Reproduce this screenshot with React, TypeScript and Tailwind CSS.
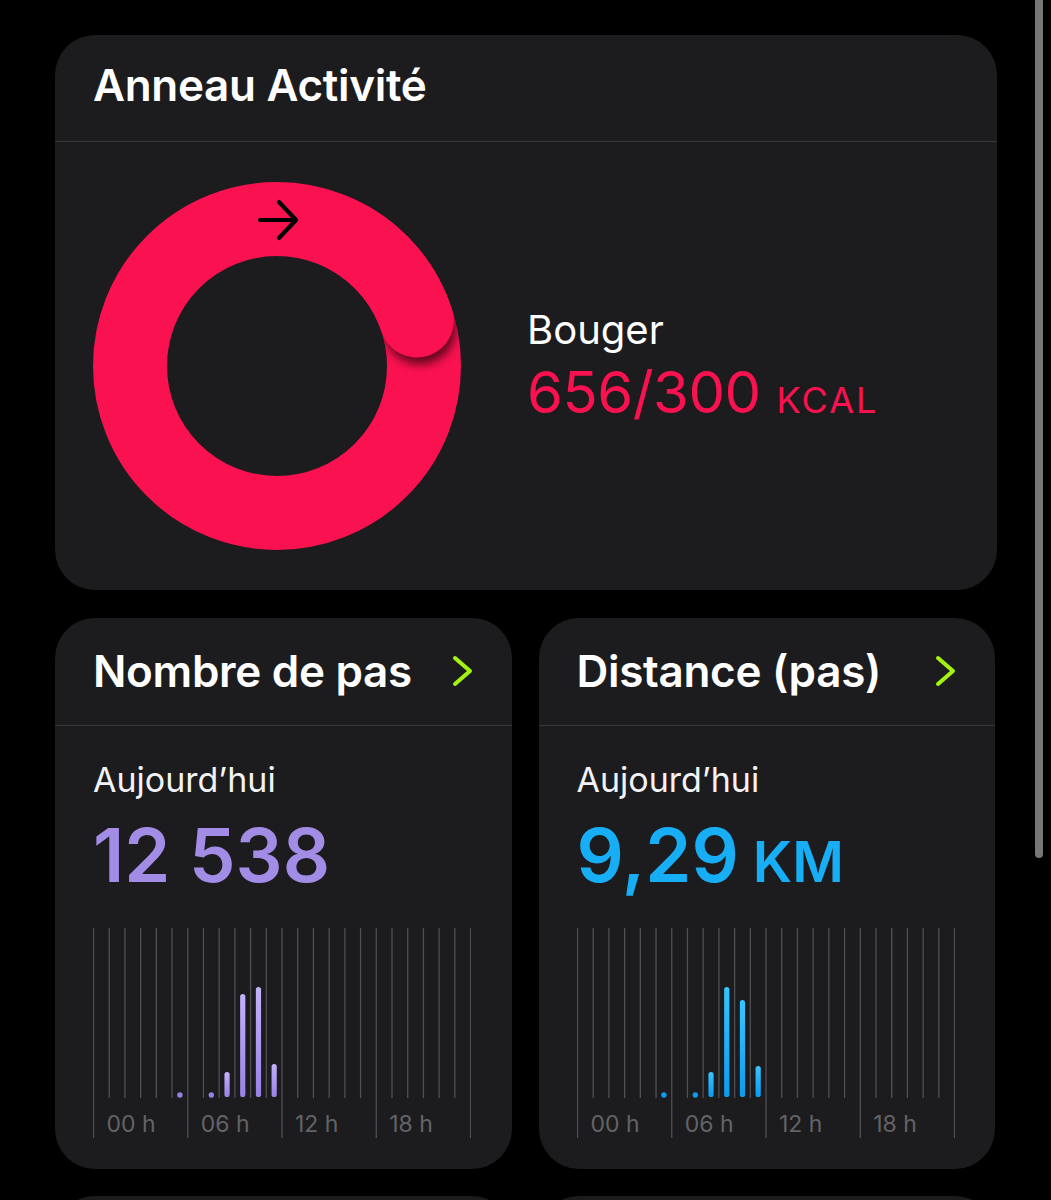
import React from "react";

const FONT = { fontFamily: 'Inter, "Noto Sans", "Liberation Sans", sans-serif' };

type Bar = { slot: number; top: number };

function HourChart({ bars, dots, from, to, id }: { bars: Bar[]; dots: number[]; from: string; to: string; id: string }) {
  const step = 15.71;
  const lines = Array.from({ length: 25 }, (_, i) => i);
  const labels = ["00 h", "06 h", "12 h", "18 h"];
  return (
    <svg width="378" height="212" viewBox="0 0 378 212" className="block">
      <defs>
        <linearGradient id={id} x1="0" y1="0" x2="0" y2="1">
          <stop offset="0" stopColor={from} />
          <stop offset="1" stopColor={to} />
        </linearGradient>
      </defs>
      {lines.map((i) => {
        const x = 0.5 + i * step;
        const major = i % 6 === 0;
        return (
          <line key={i} x1={x} x2={x} y1={0} y2={major ? 210 : 170} stroke="#505054" strokeWidth={1.3} />
        );
      })}
      {labels.map((l, k) => (
        <text key={l} x={0.5 + k * 6 * step + 13} y={204} fill="#636367" fontSize="23" style={FONT}>
          {l}
        </text>
      ))}
      {dots.map((s) => (
        <circle key={s} cx={0.5 + (s + 0.5) * step} cy={167} r={2.7} fill={to} />
      ))}
      {bars.map((b) => (
        <rect
          key={b.slot}
          x={0.5 + (b.slot + 0.5) * step - 2.6}
          y={b.top}
          width={5.2}
          height={169 - b.top}
          rx={2.6}
          fill={`url(#${id})`}
        />
      ))}
    </svg>
  );
}

function Chevron() {
  return (
    <svg width="22" height="32" viewBox="0 0 22 32" className="block">
      <path d="M3 3 L18 16 L3 29" fill="none" stroke="#a4f30c" strokeWidth="4" strokeLinecap="round" strokeLinejoin="round" />
    </svg>
  );
}

function Ring() {
  return (
    <svg width="370" height="370" viewBox="0 0 370 370" className="block shrink-0">
      <defs>
        <mask id="ringMask">
          <circle cx="185" cy="185" r="147" fill="none" stroke="white" strokeWidth="74" />
        </mask>
        <filter id="blur" x="-50%" y="-50%" width="200%" height="200%">
          <feGaussianBlur stdDeviation="5" />
        </filter>
      </defs>
      <circle cx="185" cy="185" r="147" fill="none" stroke="#fa114f" strokeWidth="74" />
      <g mask="url(#ringMask)">
        <circle cx="328" cy="147.5" r="36" fill="#000" opacity="0.6" filter="url(#blur)" />
      </g>
      <path d="M 258.5 57.7 A 147 147 0 0 1 324.8 139.6" fill="none" stroke="#fa114f" strokeWidth="74" strokeLinecap="round" />
      <path d="M 168 39 L 202 39 M 187 21 L 204 39 L 187 57" fill="none" stroke="#000" strokeWidth="4.2" strokeLinecap="round" strokeLinejoin="round" />
    </svg>
  );
}

function StatCard({
  title,
  value,
  unit,
  color,
  chart,
}: {
  title: string;
  value: string;
  unit?: string;
  color: string;
  chart: React.ReactNode;
}) {
  return (
    <div className="rounded-[40px] bg-[#1c1c1e] h-[551px] overflow-hidden">
      <div className="h-[108px] border-b border-[#38383a] pt-[31px] pl-[38px] pr-[38px] flex items-start justify-between">
        <div className="h-[44px] flex items-center w-full justify-between">
          <span className="text-[44px] leading-none font-semibold text-white tracking-[-0.3px]">{title}</span>
          <Chevron />
        </div>
      </div>
      <div className="pl-[38px]">
        <div className="mt-[37px] text-[34px] leading-none text-[#f2f2f7]">Aujourd’hui</div>
        <div className="mt-[21px] flex items-baseline font-semibold leading-none" style={{ color }}>
          <span className="text-[74px]">{value}</span>
          {unit && <span className="text-[56px] ml-[14px]">{unit}</span>}
        </div>
        <div className="mt-[36px]">{chart}</div>
      </div>
    </div>
  );
}

export default function App() {
  return (
    <div className="relative min-h-screen bg-black overflow-hidden" style={FONT}>
      <div className="pl-[55px] pt-[35px] pb-[40px]">
        <div className="w-[942px] h-[555px] rounded-[40px] bg-[#1c1c1e] overflow-hidden">
          <div className="h-[107px] border-b border-[#38383a] pt-[28px] pl-[38px]">
            <span className="text-[44px] leading-none font-semibold text-white tracking-[-0.3px]">Anneau Activité</span>
          </div>
          <div className="h-[447px] flex items-center pl-[37px]">
            <Ring />
            <div className="ml-[65px] flex flex-col">
              <div className="text-[40px] leading-none text-white">Bouger</div>
              <div className="mt-[13px] flex items-baseline leading-none text-[#fa114f]">
                <span className="text-[58px] tracking-[-0.5px]">656/300</span>
                <span className="text-[36px] ml-[16px] tracking-[2px]">KCAL</span>
              </div>
            </div>
          </div>
        </div>

        <div className="w-[940px] mt-[28px] grid grid-cols-2 gap-[27px]">
          <StatCard
            title="Nombre de pas"
            value="12 538"
            color="#a38ce6"
            chart={
              <HourChart
                id="gPurple"
                from="#c3b3fb"
                to="#9a80e6"
                dots={[5, 7]}
                bars={[
                  { slot: 8, top: 144 },
                  { slot: 9, top: 66 },
                  { slot: 10, top: 59 },
                  { slot: 11, top: 136 },
                ]}
              />
            }
          />
          <StatCard
            title="Distance (pas)"
            value="9,29"
            unit="KM"
            color="#18aef5"
            chart={
              <HourChart
                id="gBlue"
                from="#37c4ff"
                to="#0a9cf0"
                dots={[5, 7]}
                bars={[
                  { slot: 8, top: 144 },
                  { slot: 9, top: 59 },
                  { slot: 10, top: 72 },
                  { slot: 11, top: 138 },
                ]}
              />
            }
          />
        </div>

        <div className="w-[940px] mt-[27px] grid grid-cols-2 gap-[27px]">
          <div className="h-[120px] rounded-[40px] bg-[#1c1c1e]" />
          <div className="h-[120px] rounded-[40px] bg-[#1c1c1e]" />
        </div>
      </div>

      <div className="absolute right-[8px] top-0 w-[8px] h-[858px] rounded-b-full bg-[#777777]" />
    </div>
  );
}
